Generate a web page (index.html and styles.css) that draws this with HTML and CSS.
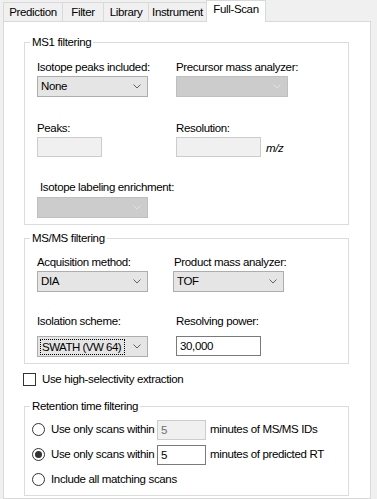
FILE: index.html
```html
<!DOCTYPE html>
<html lang="en">
<head>
    <meta charset="utf-8">
    <meta name="viewport" content="width=device-width, initial-scale=1">
    <title>Full-Scan settings</title>
    <link rel="stylesheet" href="styles.css">
</head>
<body>

    <div class="tabstrip">
        <div class="tab tab-prediction">Prediction</div>
        <div class="tab tab-filter">Filter</div>
        <div class="tab tab-library">Library</div>
        <div class="tab tab-instrument">Instrument</div>
        <div class="tab tab-fullscan active">Full-Scan</div>
    </div>

    <div class="page">

        <!-- MS1 -->
        <fieldset class="group group-ms1">
            <legend>MS1 filtering</legend>
            <div class="fields">
                <div class="field">
                    <label>Isotope peaks included:</label>
                    <div class="combo">
                        <span>None</span>
                        <svg class="chevron" width="8" height="5" viewBox="0 0 8 5"><polyline points="0.5,0.5 4,4 7.5,0.5"/></svg>
                    </div>
                </div>
                <div class="field">
                    <label>Precursor mass analyzer:</label>
                    <div class="combo disabled wide">
                        <span></span>
                        <svg class="chevron" width="8" height="5" viewBox="0 0 8 5"><polyline points="0.5,0.5 4,4 7.5,0.5"/></svg>
                    </div>
                </div>

                <div class="field next-row">
                    <label>Peaks:</label>
                    <div class="textbox disabled peaks"></div>
                </div>
                <div class="field next-row">
                    <label>Resolution:</label>
                    <div class="with-unit">
                        <div class="textbox disabled medium"></div>
                        <i class="unit">m/z</i>
                    </div>
                </div>

                <div class="field last-row indent">
                    <label>Isotope labeling enrichment:</label>
                    <div class="combo disabled">
                        <span></span>
                        <svg class="chevron" width="8" height="5" viewBox="0 0 8 5"><polyline points="0.5,0.5 4,4 7.5,0.5"/></svg>
                    </div>
                </div>
            </div>
        </fieldset>

        <!-- MS/MS -->
        <fieldset class="group group-msms">
            <legend>MS/MS filtering</legend>
            <div class="fields">
                <div class="field">
                    <label>Acquisition method:</label>
                    <div class="combo">
                        <span>DIA</span>
                        <svg class="chevron" width="8" height="5" viewBox="0 0 8 5"><polyline points="0.5,0.5 4,4 7.5,0.5"/></svg>
                    </div>
                </div>
                <div class="field shifted">
                    <label>Product mass analyzer:</label>
                    <div class="combo">
                        <span>TOF</span>
                        <svg class="chevron" width="8" height="5" viewBox="0 0 8 5"><polyline points="0.5,0.5 4,4 7.5,0.5"/></svg>
                    </div>
                </div>

                <div class="field next-row loose">
                    <label>Isolation scheme:</label>
                    <div class="combo">
                        <span class="focus">SWATH (VW 64)</span>
                        <svg class="chevron" width="8" height="5" viewBox="0 0 8 5"><polyline points="0.5,0.5 4,4 7.5,0.5"/></svg>
                    </div>
                </div>
                <div class="field next-row loose">
                    <label>Resolving power:</label>
                    <div class="textbox medium">30,000</div>
                </div>
            </div>
        </fieldset>

        <div class="check-row">
            <span class="checkbox"></span>
            <span>Use high-selectivity extraction</span>
        </div>

        <!-- RT -->
        <fieldset class="group group-rt">
            <legend>Retention time filtering</legend>
            <div class="options">
                <div class="option">
                    <span class="radio"></span>
                    <span class="option-text">Use only scans within</span>
                    <div class="textbox disabled minutes">5</div>
                    <span class="after">minutes of MS/MS IDs</span>
                </div>
                <div class="option">
                    <span class="radio checked"></span>
                    <span class="option-text">Use only scans within</span>
                    <div class="textbox minutes">5</div>
                    <span class="after">minutes of predicted RT</span>
                </div>
                <div class="option">
                    <span class="radio"></span>
                    <span>Include all matching scans</span>
                </div>
            </div>
        </fieldset>

    </div>

</body>
</html>
```

FILE: styles.css
```css
body {
    margin: 0;
    height: 499px;
    overflow: hidden;
    background: #f0f0f0;
    color: #000;
    font-family: "Liberation Sans", Arial, sans-serif;
    font-size: 11.5px;
    letter-spacing: -0.35px;
    line-height: 15px;
}

/* tabs */
.tabstrip {
    display: flex;
    align-items: flex-end;
    height: 21px;
    padding-left: 3px;
}

.tab {
    box-sizing: border-box;
    height: 19px;
    margin-left: -1px;
    border: 1px solid #d9d9d9;
    border-bottom: none;
    background: #f0f0f0;
    text-align: center;
    line-height: 18px;
}

.tab-prediction { width: 60px; margin-left: 0; }
.tab-filter { width: 42px; }
.tab-library { width: 46px; }
.tab-instrument { width: 59px; }

.tab.active {
    position: relative;
    z-index: 1;
    width: 60px;
    height: 22px;
    margin-bottom: -1px;
    background: #fff;
    line-height: 17px;
}

.page {
    box-sizing: border-box;
    width: 368px;
    height: 478px;
    margin-left: 3px;
    border: 1px solid #d9d9d9;
    background: #fff;
}

/* group boxes */
.group {
    box-sizing: border-box;
    width: 325px;
    margin: 0 0 0 20px;
    padding: 0;
    border: 1px solid #dcdcdc;
}

.group legend {
    margin-left: 5px;
    padding: 0 2px;
    line-height: 15px;
}

.group-ms1 { margin-top: 13px; }
.group-msms { margin-top: 6px; }
.group-rt { margin-top: 13px; }

.fields {
    display: grid;
    grid-template-columns: 139px 1fr;
    padding: 10px 0 6px 12px;
}

.group-msms .fields { padding-top: 9px; }

.field label {
    display: block;
    height: 15px;
    margin-bottom: 1px;
    white-space: nowrap;
}

.field.next-row { margin-top: 24px; }
.field.last-row { margin-top: 23px; }
.field.last-row label { margin-bottom: 2px; }
.field.indent label { padding-left: 3px; }
.group-msms .field.next-row { margin-top: 22px; }
.field.loose label { margin-bottom: 7px; }
.field.shifted { margin-left: -3px; }
.field.shifted label { padding-left: 1px; }

/* combo boxes */
.combo {
    box-sizing: border-box;
    display: flex;
    align-items: center;
    justify-content: space-between;
    width: 111px;
    height: 21px;
    padding: 0 6px 0 3px;
    border: 1px solid #adadad;
    background: #e5e5e5;
}

.combo.wide { width: 112px; }

.combo.disabled {
    border-color: #bfbfbf;
    background: #cccccc;
}

.chevron polyline {
    fill: none;
    stroke: #606060;
    stroke-width: 1;
}

.combo.disabled .chevron polyline { stroke: #e2e2e2; }

.combo .focus {
    box-sizing: border-box;
    width: 85px;
    height: 16px;
    margin-left: -1px;
    padding-left: 1px;
    border: 1px dotted #000;
    letter-spacing: -0.5px;
    line-height: 14px;
    white-space: nowrap;
}

/* text boxes */
.textbox {
    box-sizing: border-box;
    height: 20px;
    padding-left: 3px;
    border: 1px solid #7a7a7a;
    background: #fff;
    line-height: 18px;
}

.textbox.disabled {
    border-color: #cccccc;
    background: #f0f0f0;
    color: #6d6d6d;
}

.textbox.peaks { width: 65px; }
.textbox.medium { width: 85px; }
.textbox.minutes { width: 49px; }

.with-unit {
    display: flex;
    align-items: center;
}

.unit {
    margin: 2px 0 0 5px;
}

/* checkbox */
.check-row {
    display: flex;
    align-items: center;
    height: 13px;
    margin: 9px 0 0 19px;
}

.checkbox {
    box-sizing: border-box;
    width: 13px;
    height: 13px;
    margin-right: 6px;
    border: 1px solid #333;
    background: #fff;
}

/* radio options */
.options {
    padding: 3px 0 3px 7px;
}

.option {
    display: flex;
    align-items: center;
    height: 25px;
}

.radio {
    box-sizing: border-box;
    display: flex;
    align-items: center;
    justify-content: center;
    width: 13px;
    height: 13px;
    margin-right: 6px;
    border: 1px solid #333;
    border-radius: 50%;
    background: #fff;
}

.radio.checked::after {
    content: "";
    width: 7px;
    height: 7px;
    border-radius: 50%;
    background: #333;
}

.option-text {
    width: 106px;
    white-space: nowrap;
}

.option .after {
    margin-left: 4px;
    white-space: nowrap;
}
```
